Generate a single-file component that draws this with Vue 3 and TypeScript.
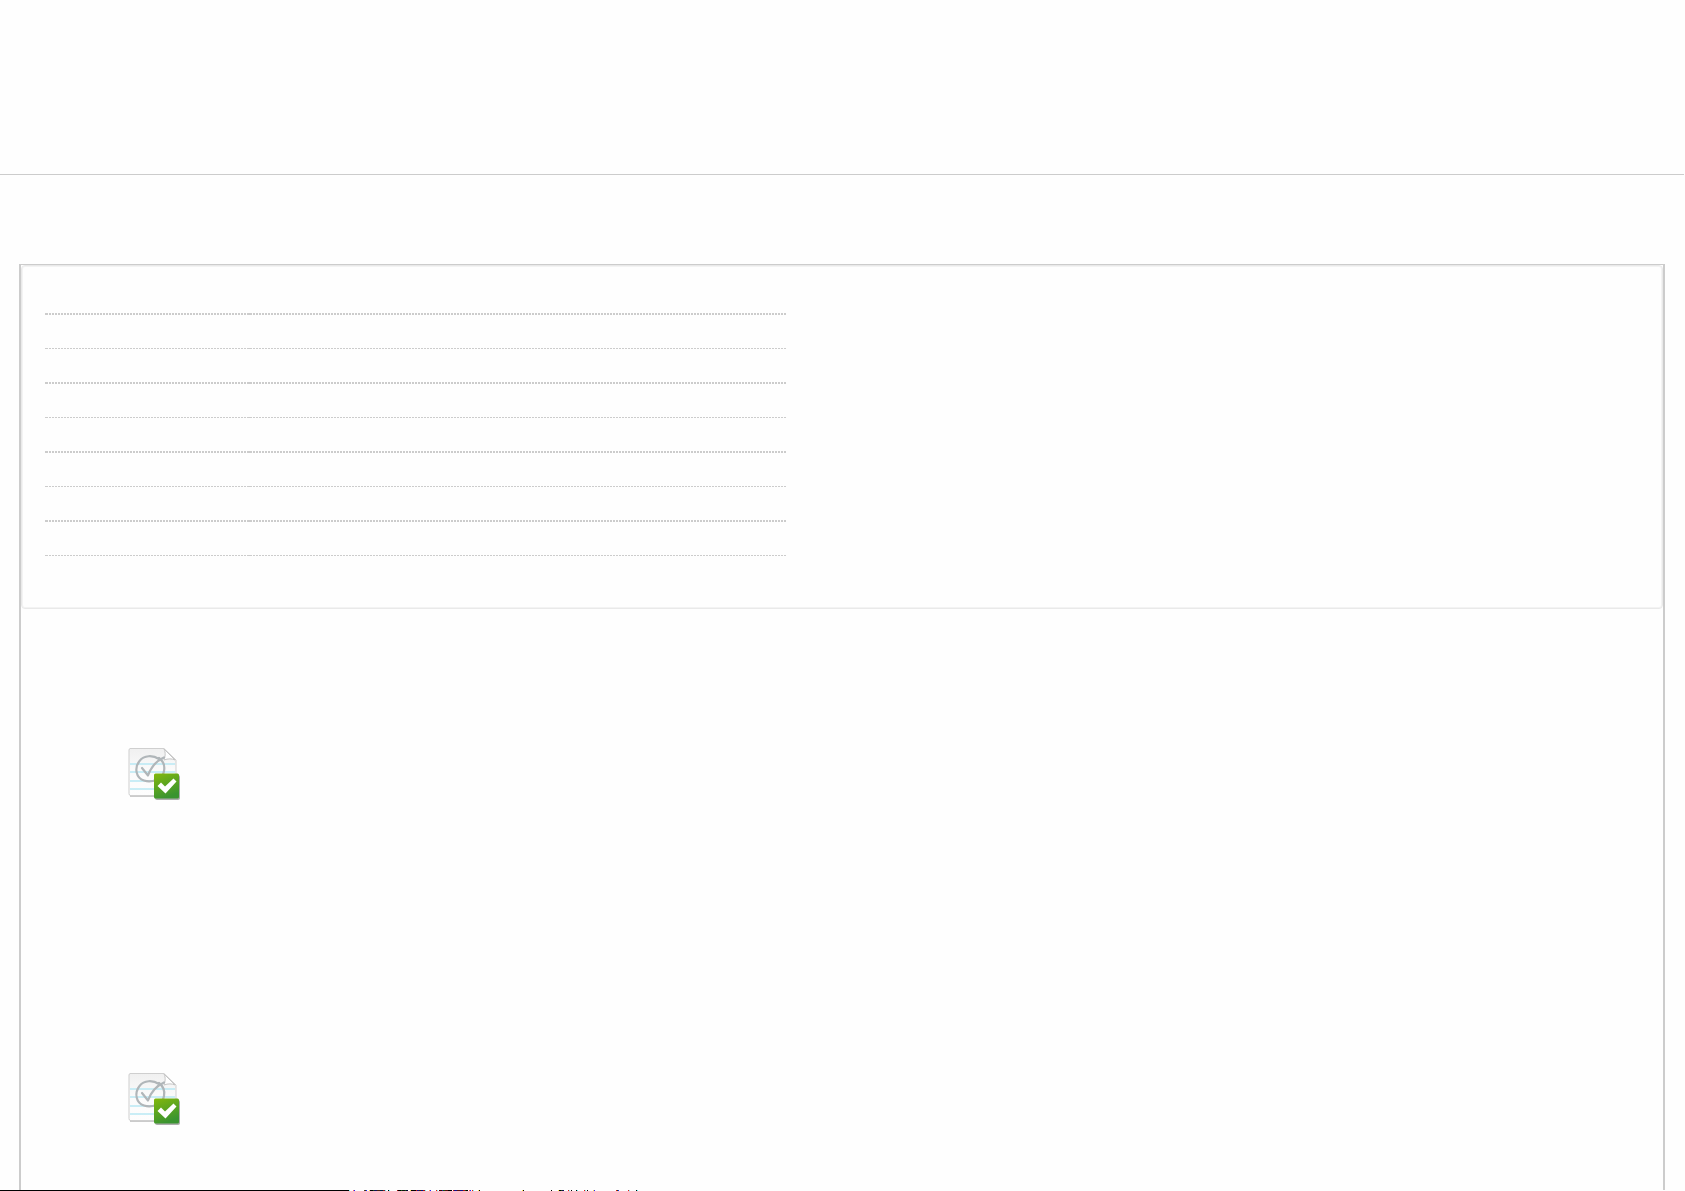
<script setup lang="ts">
const rows: number[] = [1, 2, 3, 4, 5, 6, 7, 8]
const tasks: number[] = [1, 2]

interface Mark { x: number; w: number; c: string }
const marks: Mark[] = [
  [349, 1, '#7ff'], [353, 1, '#f66'], [354, 1, '#22f'],
  [364, 1, '#632'], [365, 1, '#242'], [366, 1, '#22f'],
  [369, 1, '#fd4'], [370, 3, '#000'], [373, 1, '#151'], [374, 3, '#115'], [377, 3, '#421'], [380, 3, '#024'], [383, 2, '#822'], [385, 1, '#6ef'],
  [388, 1, '#000'], [389, 1, '#6ff'],
  [397, 1, '#a11'], [398, 3, '#000'], [401, 1, '#161'], [402, 3, '#111'], [405, 1, '#151'], [406, 2, '#003'],
  [410, 1, '#fd4'], [411, 5, '#000'], [416, 1, '#c11'], [417, 2, '#118'], [419, 2, '#420'], [421, 2, '#018'], [423, 2, '#a11'], [425, 1, '#6ff'],
  [429, 1, '#f96'], [430, 1, '#22f'], [436, 1, '#e11'], [437, 1, '#6ff'],
  [439, 3, '#400'], [442, 1, '#22a'], [443, 2, '#151'], [445, 3, '#511'], [448, 4, '#000'],
  [453, 1, '#c11'], [454, 3, '#118'], [457, 3, '#511'], [460, 3, '#118'], [463, 2, '#a11'], [465, 1, '#151'], [466, 2, '#000'],
  [469, 1, '#f66'], [470, 1, '#22f'], [472, 1, '#e11'], [473, 1, '#6ff'],
  [478, 1, '#fe4'], [479, 1, '#000'], [522, 1, '#fe4'], [523, 1, '#000'], [551, 1, '#000'],
  [558, 1, '#fe4'], [559, 2, '#000'], [561, 1, '#151'], [562, 2, '#115'],
  [568, 1, '#e11'], [569, 1, '#6ff'], [571, 1, '#000'], [576, 1, '#000'], [577, 1, '#6ff'],
  [584, 1, '#e11'], [585, 1, '#6ff'], [587, 1, '#000'], [593, 1, '#fd4'], [594, 1, '#22f'],
  [616, 1, '#e11'], [617, 1, '#151'], [618, 1, '#22f'],
  [628, 1, '#e11'], [629, 1, '#6ff'], [636, 1, '#000'], [637, 1, '#6ff'],
].map(([x, w, c]) => ({ x, w, c }) as Mark)
</script>

<template>
  <div class="page">
    <header class="top"></header>
    <main class="card">
      <section class="summary">
        <table class="details">
          <tbody>
            <tr v-for="row in rows" :key="row">
              <td class="label"></td>
              <td></td>
            </tr>
          </tbody>
        </table>
      </section>
      <ul class="tasks">
        <li v-for="task in tasks" :key="task" class="task">
          <svg width="56" height="56" viewBox="0 0 56 56" aria-hidden="true">
            <defs>
              <linearGradient :id="`paper${task}`" x1="0" y1="0" x2="0" y2="1">
                <stop offset="0" stop-color="#f0f0f0" />
                <stop offset=".5" stop-color="#fbfbfb" />
                <stop offset="1" stop-color="#fdfdfd" />
              </linearGradient>
              <linearGradient :id="`badge${task}`" x1="0" y1="0" x2="0.4" y2="1">
                <stop offset="0" stop-color="#83b80c" />
                <stop offset="1" stop-color="#3a9430" />
              </linearGradient>
              <filter :id="`soft${task}`" x="-20%" y="-20%" width="140%" height="140%">
                <feGaussianBlur stdDeviation="0.7" />
              </filter>
              <filter :id="`ink${task}`" x="-20%" y="-20%" width="140%" height="140%">
                <feGaussianBlur stdDeviation="0.4" />
              </filter>
            </defs>
            <path d="M3 3H37L49 15V49.500H3Z" fill="#777" opacity=".75" :filter="`url(#soft${task})`" />
            <path d="M3 1.500H37L49 13V46Q49 48.500 47 48.500H3.500Q2 48.500 2 46.500V3Q2 1.500 3.500 1.500Z" :fill="`url(#paper${task})`" stroke="#cfcfcf" />
            <g :filter="`url(#ink${task})`">
              <path d="M3 17H48M3 25H48M3 34H48M3 42H48" stroke="#b9e9f5" stroke-width="1.600" />
              <path d="M37 2C39 6 38 10 37 13C41 11.500 45 11.500 48 13Z" fill="#fff" stroke="#c4c4c4" stroke-width="1" />
              <g fill="none" stroke="#b0b6b9" stroke-width="2.200" stroke-linecap="round" stroke-linejoin="round">
                <path d="M32 12C26 8 17 8 12.500 14C7 21 9 31 17 33.500C25 36 36 32 37 24C38 19 36 14 32 11" />
                <path d="M15 21L21 28.500C24 20 29 14 37 10.500" />
              </g>
            </g>
            <rect x="28" y="28" width="25" height="25" rx="2" fill="#777" opacity=".6" :filter="`url(#soft${task})`" />
            <rect x="27" y="26.500" width="25" height="25" rx="1.500" :fill="`url(#badge${task})`" />
            <path d="M30.500 39L34 35.500L38 39.500L46.500 31.500L49.500 34.500L38.500 46.500Z" fill="#fff" :filter="`url(#ink${task})`" />
          </svg>
        </li>
      </ul>
    </main>
    <footer class="strip">
      <svg width="640" height="1" shape-rendering="crispEdges" aria-hidden="true">
        <rect width="349" height="1" fill="#000" />
        <rect v-for="m in marks" :key="m.x" :x="m.x" :width="m.w" height="1" :fill="m.c" />
      </svg>
    </footer>
  </div>
</template>

<style>
body {
  margin: 0;
  background: #fefefe;
}
</style>

<style scoped>
.page {
  display: flex;
  flex-direction: column;
  height: 100vh;
  overflow: hidden;
  font-family: "Liberation Sans", Arial, sans-serif;
}
.top {
  flex: none;
  height: 174px;
  margin-right: 1px;
  border-bottom: 1px solid #ccc;
}
.card {
  flex: 1;
  min-height: 0;
  overflow: hidden;
  margin: 89px 20px 0 19px;
  border: 2px solid #ccc;
  border-top-width: 1px;
  border-bottom: 0;
}
.summary {
  box-sizing: border-box;
  height: 344px;
  padding: 14px 23px;
  border: 1px solid #e9e9e9;
  border-radius: 4px;
  box-shadow: inset 0 0 0 1px #f3f3f3;
}
.details {
  table-layout: fixed;
  width: 741px;
  border-collapse: collapse;
}
td {
  height: 34px;
  padding: 0;
  background:
    linear-gradient(#ccc, #ccc) 0 100% / 1px 1px no-repeat,
    repeating-linear-gradient(90deg, transparent 0 1px, #ccc 1px 3px) 0 100% / 100% 1px no-repeat;
}
tr:nth-child(odd) td {
  height: 35px;
  background-size: 1px 2px, 100% 2px;
}
.label {
  width: 204px;
}
.tasks {
  margin: 0;
  padding: 138px 0 0 106px;
  list-style: none;
}
.task {
  height: 325px;
}
.task svg {
  display: block;
}
.strip {
  flex: none;
  height: 1px;
}
.strip svg {
  display: block;
}
</style>
